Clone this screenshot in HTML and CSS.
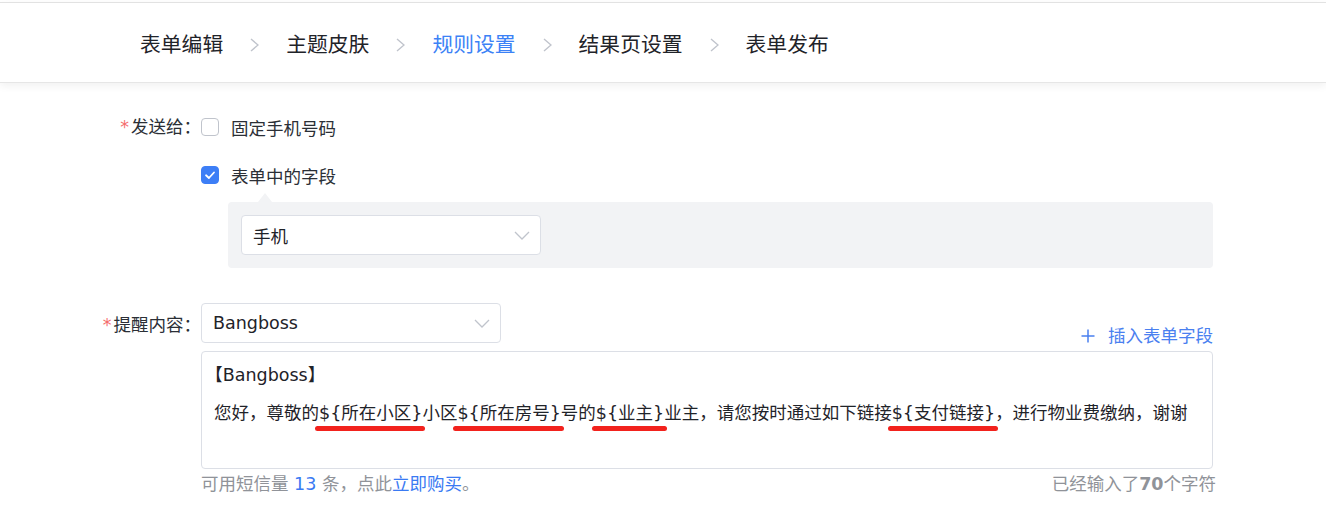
FILE: index.html
```html
<!DOCTYPE html>
<html lang="zh-CN">

<head>
    <meta charset="UTF-8">
    <meta name="viewport" content="width=device-width, initial-scale=1.0">
    <title>规则设置</title>
    <link rel="stylesheet" href="styles.css">
</head>

<body>
    <nav class="steps">
        <span class="step">表单编辑</span>
        <svg class="step-arrow" viewBox="0 0 9 14"><polyline points="1,1 8,7 1,13" /></svg>
        <span class="step">主题皮肤</span>
        <svg class="step-arrow" viewBox="0 0 9 14"><polyline points="1,1 8,7 1,13" /></svg>
        <span class="step active">规则设置</span>
        <svg class="step-arrow" viewBox="0 0 9 14"><polyline points="1,1 8,7 1,13" /></svg>
        <span class="step">结果页设置</span>
        <svg class="step-arrow" viewBox="0 0 9 14"><polyline points="1,1 8,7 1,13" /></svg>
        <span class="step">表单发布</span>
    </nav>

    <main class="form">
        <div class="row">
            <label class="label required">发送给：</label>
            <div class="field">
                <div class="option">
                    <span class="box"></span>
                    <span>固定手机号码</span>
                </div>
                <div class="option">
                    <span class="box checked">
                        <svg viewBox="0 0 18 18"><polyline points="4.5,9.3 7.8,12.4 13.5,6.2" /></svg>
                    </span>
                    <span>表单中的字段</span>
                </div>
                <div class="panel">
                    <div class="select">
                        <span>手机</span>
                        <svg class="select-arrow" viewBox="0 0 16 9"><polyline points="1,1 8,8 15,1" /></svg>
                    </div>
                </div>
            </div>
        </div>

        <div class="row row-message">
            <label class="label label-tall required">提醒内容：</label>
            <div class="field">
                <div class="field-top">
                    <div class="select">
                        <span>Bangboss</span>
                        <svg class="select-arrow" viewBox="0 0 16 9"><polyline points="1,1 8,8 15,1" /></svg>
                    </div>
                    <a class="insert">
                        <svg viewBox="0 0 14 14"><path d="M7 0.5V13.5M0.5 7H13.5" /></svg>
                        <span>插入表单字段</span>
                    </a>
                </div>
                <div class="message">
                    <div><span class="bracket">【</span>Bangboss<span class="bracket">】</span></div>
                    <div>您好，尊敬的<span class="mark">${所在小区}</span>小区<span class="mark">${所在房号}</span>号的<span class="mark">${业主}</span>业主，请您按时通过如下链接<span class="mark">${支付链接}</span>，进行物业费缴纳，谢谢</div>
                </div>
                <div class="meta">
                    <span>可用短信量 <b class="count">13</b> 条，点此<a class="buy">立即购买</a>。</span>
                    <span>已经输入了<b>70</b>个字符</span>
                </div>
            </div>
        </div>
    </main>
</body>

</html>
```

FILE: styles.css
```css
* {
    box-sizing: border-box;
}

body {
    margin: 0;
    font-family: "DejaVu Sans", "Noto Sans CJK SC", sans-serif;
    color: #303133;
    background-color: #ffffff;
}

/* step bar */
.steps {
    margin-top: 2px;
    height: 81px;
    padding: 4px 0 0 140px;
    display: flex;
    align-items: center;
    border-top: 1px solid #e2e2e2;
    border-bottom: 1px solid #e6e6e6;
    box-shadow: 0 3px 8px rgba(0, 0, 0, 0.06);
}

.step {
    font-size: 20.8px;
    line-height: 28px;
    color: #1f2329;
}

.step.active {
    color: #3c82f6;
}

.step-arrow {
    width: 9px;
    height: 14px;
    margin: 0 27px;
    fill: none;
    stroke: #c0c4cc;
    stroke-width: 1.4;
}

/* form */
.form {
    padding-top: 32px;
    font-size: 17.5px;
}

.row {
    display: grid;
    grid-template-columns: 201px 1012px;
}

.row-message {
    margin-top: 35px;
}

.label {
    text-align: right;
    line-height: 24px;
    color: #2b2f36;
}

.label-tall {
    line-height: 40px;
    padding-top: 2px;
}

.required::before {
    content: "*";
    color: #f56c6c;
    margin-right: 2px;
}

.option {
    display: flex;
    align-items: center;
    height: 24px;
    color: #2b2f36;
}

.option + .option {
    margin-top: 24px;
}

.box {
    width: 18px;
    height: 18px;
    margin-right: 12px;
    border: 1px solid #c0c4cc;
    border-radius: 4px;
    background-color: #ffffff;
}

.box.checked {
    border-color: #3d7ef6;
    background-color: #3d7ef6;
}

.box svg {
    display: block;
    width: 16px;
    height: 16px;
    fill: none;
    stroke: #ffffff;
    stroke-width: 2;
    stroke-linecap: round;
    stroke-linejoin: round;
}

.panel {
    position: relative;
    margin: 15px 0 0 27px;
    padding: 13px;
    background-color: #f2f3f5;
    border-radius: 4px;
}

.panel::before {
    content: "";
    position: absolute;
    left: 30px;
    top: -9px;
    border-left: 7.5px solid transparent;
    border-right: 7.5px solid transparent;
    border-bottom: 9px solid #f2f3f5;
}

.select {
    width: 300px;
    height: 40px;
    padding: 0 10px 0 11px;
    display: flex;
    align-items: center;
    justify-content: space-between;
    background-color: #ffffff;
    border: 1px solid #dcdfe6;
    border-radius: 4px;
    color: #1f2329;
}

.select-arrow {
    width: 16px;
    height: 9px;
    fill: none;
    stroke: #c0c4cc;
    stroke-width: 1.3;
}

.field-top {
    display: flex;
    justify-content: space-between;
    align-items: flex-end;
}

.insert {
    display: flex;
    align-items: center;
    gap: 13px;
    margin-bottom: -5px;
    line-height: 24px;
    color: #4a80f0;
    cursor: pointer;
}

.insert svg {
    width: 14px;
    height: 14px;
    fill: none;
    stroke: currentColor;
    stroke-width: 1.5;
}

.message {
    margin-top: 8px;
    height: 118px;
    padding: 4px 12px;
    line-height: 38px;
    border: 1px solid #dcdfe6;
    border-radius: 4px;
    color: #1f2329;
}

.bracket {
    font-feature-settings: "halt";
}

.mark {
    position: relative;
}

.mark::after {
    content: "";
    position: absolute;
    left: -4px;
    right: -3px;
    bottom: -8px;
    height: 5px;
    border-radius: 3px;
    background-color: #f2221d;
}

.meta {
    display: flex;
    justify-content: space-between;
    margin: 3px -3px 0 0;
    line-height: 24px;
    color: #909399;
}

.meta b {
    font-weight: bold;
}

.meta .count {
    font-weight: normal;
    color: #3a7af3;
}

.buy {
    color: #3a7af3;
    cursor: pointer;
}
```
